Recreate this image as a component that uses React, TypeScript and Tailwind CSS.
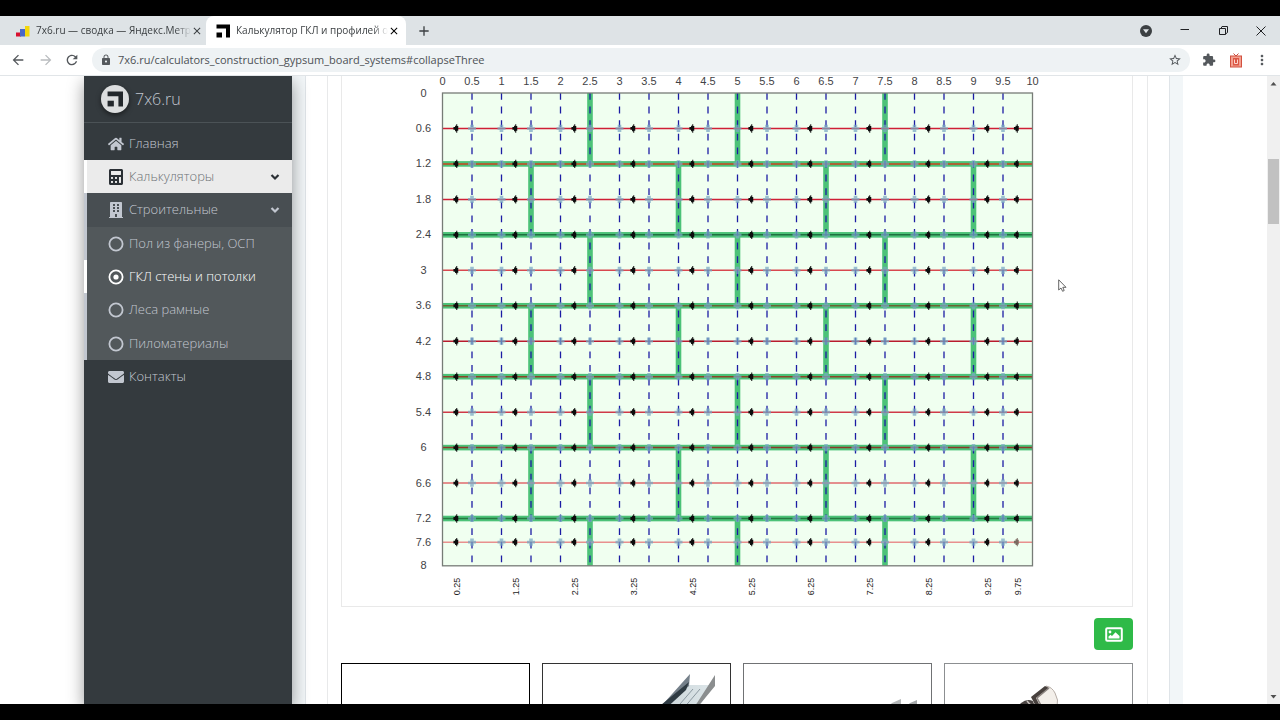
import type { ReactNode } from "react";
import { FaHome, FaCalculator, FaBuilding, FaEnvelope } from "react-icons/fa";
import {
  MdArrowBack,
  MdArrowForward,
  MdRefresh,
  MdLock,
  MdStarBorder,
  MdExtension,
  MdMoreVert,
  MdClose,
  MdAdd,
} from "react-icons/md";

function LogoMark({ className }: { className?: string }) {
  return (
    <svg viewBox="0 0 14 14" className={className} fill="currentColor" aria-hidden="true">
      <path d="M0.5 0.5H14V13.5H10V4.5H0.5Z" />
      <path d="M0.5 8.5H6V13.5H0.5Z" />
    </svg>
  );
}

function TabStrip() {
  return (
    <div className="flex h-[29px] items-stretch bg-[#dee3e6] text-[10px] text-[#3c4043]">
      <div className="flex w-[206px] items-center pl-4 pr-[7px]">
        <svg viewBox="0 0 14 12" className="mr-1.5 h-3 w-3.5 shrink-0" aria-hidden="true">
          <rect x="0" y="7.5" width="5" height="4" fill="#d8102f" />
          <rect x="4" y="4" width="5" height="7.5" fill="#4a68c8" />
          <rect x="9" y="1" width="4.5" height="10.5" fill="#f4d70c" />
        </svg>
        <span className="flex-1 whitespace-nowrap [mask-image:linear-gradient(to_right,black_90%,transparent)]">
          7x6.ru — сводка — Яндекс.Метр
        </span>
        <button aria-label="Закрыть вкладку">
          <MdClose className="size-3" />
        </button>
      </div>
      <div className="flex w-[200px] items-center rounded-t-lg bg-white pl-2.5 pr-[7px]">
        <LogoMark className="mr-1.5 size-3.5 shrink-0 text-black" />
        <span className="flex-1 whitespace-nowrap [mask-image:linear-gradient(to_right,black_90%,transparent)]">
          Калькулятор ГКЛ и профилей о
        </span>
        <button aria-label="Закрыть вкладку" className="text-black">
          <MdClose className="size-3" />
        </button>
      </div>
      <button aria-label="Новая вкладка" className="ml-2.5">
        <MdAdd className="size-4" />
      </button>
      <div className="ml-auto flex items-center text-[#202124]">
        <button aria-label="Поиск вкладок" className="mr-7">
          <svg viewBox="0 0 12 12" className="size-3">
            <circle cx="6" cy="6" r="6" fill="#3c4043" />
            <path d="M3 4.3H9L6 8.2Z" fill="#dee3e6" />
          </svg>
        </button>
        <button aria-label="Свернуть" className="mr-7">
          <svg viewBox="0 0 10 10" className="size-2.5" stroke="currentColor" fill="none">
            <path d="M0.5 3.5H9" />
          </svg>
        </button>
        <button aria-label="Развернуть" className="mr-7">
          <svg viewBox="0 0 10 10" className="size-2.5" stroke="currentColor" fill="none">
            <path d="M1.5 2.5H7.5V8.5H1.5ZM3 2.5L4 0.5H9.5V6.5L7.5 8" />
          </svg>
        </button>
        <button aria-label="Закрыть" className="mr-3.5">
          <svg viewBox="0 0 10 10" className="size-2.5" stroke="currentColor" fill="none">
            <path d="M0.5 0.5L9.5 9.5M9.5 0.5L0.5 9.5" />
          </svg>
        </button>
      </div>
    </div>
  );
}

function Toolbar() {
  return (
    <div className="flex h-[31px] items-center border-b border-[#e1e5e8] bg-white pl-2.5 text-[#54585c]">
      <button aria-label="Назад" className="mr-3">
        <MdArrowBack className="size-4" />
      </button>
      <button aria-label="Вперёд" className="mr-2.5 text-[#b9bcbf]">
        <MdArrowForward className="size-4" />
      </button>
      <button aria-label="Обновить">
        <MdRefresh className="size-4" />
      </button>
      <div className="ml-3 flex h-6 flex-1 items-center rounded-full bg-[#eef2f4] px-2">
        <MdLock className="mr-1.5 size-3" />
        <input
          aria-label="Адрес"
          readOnly
          value="7x6.ru/calculators_construction_gypsum_board_systems#collapseThree"
          className="min-w-0 flex-1 bg-transparent text-[11px] text-[#4d5155] outline-none"
        />
        <button aria-label="В закладки">
          <MdStarBorder className="size-3.5" />
        </button>
      </div>
      <button aria-label="Расширения" className="ml-3">
        <MdExtension className="size-3.5" />
      </button>
      <button aria-label="Расширение" className="ml-3.5">
        <svg viewBox="0 0 12 15" className="h-[15px] w-3">
          <path d="M3.5 0.5L6 3L8.5 0.5" stroke="#c94a3c" fill="none" />
          <rect x="0.5" y="3" width="11" height="11" fill="#f3a090" stroke="#d2503f" />
          <rect x="3" y="5" width="6" height="7.5" fill="#dc5644" />
          <path d="M4.5 6.5V10.5H7.5V6.5" stroke="#fbd5cd" fill="none" />
        </svg>
      </button>
      <button aria-label="Меню" className="ml-3 mr-2.5">
        <MdMoreVert className="size-4" />
      </button>
    </div>
  );
}

function Ring({ dot = false }: { dot?: boolean }) {
  return (
    <svg viewBox="0 0 16 16" className="size-4" aria-hidden="true">
      <circle cx="8" cy="8" r="6.6" fill="none" stroke="currentColor" strokeWidth="1.8" />
      {dot && <circle cx="8" cy="8" r="2.6" fill="currentColor" />}
    </svg>
  );
}

function Chevron() {
  return (
    <svg viewBox="0 0 10 8" className="h-2 w-2.5" aria-hidden="true">
      <path d="M1.5 2L5 5.5L8.5 2" fill="none" stroke="currentColor" strokeWidth="2.2" />
    </svg>
  );
}

function NavItem({
  icon,
  label,
  className,
  chevron,
}: {
  icon: ReactNode;
  label: string;
  className: string;
  chevron?: ReactNode;
}) {
  return (
    <a href="#collapseThree" className={`flex items-center border-l-3 pl-5 pr-3 text-[13px] font-light ${className}`}>
      <span className="mr-1 flex w-[18px] justify-center text-base">{icon}</span>
      <span className="flex-1 whitespace-nowrap">{label}</span>
      {chevron}
    </a>
  );
}

function Sidebar() {
  return (
    <aside className="z-10 w-52 shrink-0 bg-[#343a3e] text-[#c2c7d0] shadow-[0_6px_16px_rgba(0,0,0,0.4)]">
      <a href="#top" className="flex h-[47px] items-center border-b border-[#4b5256] pl-[17px] text-base font-light">
        <span className="mr-1.5 flex size-7 items-center justify-center rounded-full bg-[#dcdedf] shadow-[0_2px_5px_rgba(0,0,0,0.5)]">
          <LogoMark className="size-4 text-[#22272b]" />
        </span>
        7x6.ru
      </a>
      <nav className="pt-1">
        <NavItem icon={<FaHome />} label="Главная" className="h-[33px] border-transparent" />
        <NavItem
          icon={<FaCalculator className="text-[#2b3035]" />}
          label="Калькуляторы"
          chevron={<span className="text-[#2b3035]"><Chevron /></span>}
          className="h-[33px] border-white bg-[#ebebeb] text-[#6c7175]"
        />
        <NavItem
          icon={<FaBuilding />}
          label="Строительные"
          chevron={<Chevron />}
          className="h-[34px] border-[#c2c7d0] bg-[#484e52]"
        />
        <div className="bg-[#52585b]">
          <NavItem icon={<Ring />} label="Пол из фанеры, ОСП" className="h-[33px] border-[#c2c7d0]" />
          <NavItem icon={<Ring dot />} label="ГКЛ стены и потолки" className="h-[33px] border-white text-white" />
          <NavItem icon={<Ring />} label="Леса рамные" className="h-[34px] border-[#c2c7d0]" />
          <NavItem icon={<Ring />} label="Пиломатериалы" className="h-[33px] border-[#c2c7d0]" />
        </div>
        <NavItem icon={<FaEnvelope />} label="Контакты" className="h-[34px] border-transparent" />
      </nav>
    </aside>
  );
}

const LEFT = 100.5;
const TOP = 17;
const UNIT = 59;
const px = (v: number) => LEFT + v * UNIT;
const py = (v: number) => TOP + v * 59.1;

const columns = Array.from({ length: 21 }, (_, i) => i / 2);
const rows = [
  { v: 0.6, color: "#cf1f35" },
  { v: 1.2, color: "#c8451f" },
  { v: 1.8, color: "#cf1f35" },
  { v: 2.4, color: "#1f7040" },
  { v: 3, color: "#d8484f" },
  { v: 3.6, color: "#6b6432" },
  { v: 4.2, color: "#b81c2e" },
  { v: 4.8, color: "#8a4628" },
  { v: 5.4, color: "#cf3a48" },
  { v: 6, color: "#8a3a28" },
  { v: 6.6, color: "#e06a6e" },
  { v: 7.2, color: "#267a40" },
  { v: 7.6, color: "#e8908e" },
];
const seams = [1.2, 2.4, 3.6, 4.8, 6, 7.2];
const hangers = [0.25, 1.25, 2.25, 3.25, 4.25, 5.25, 6.25, 7.25, 8.25, 9.25, 9.75];

function LayoutChart() {
  const joints = [0, 1, 2, 3, 4, 5, 6].flatMap((r) =>
    (r % 2 === 0 ? [2.5, 5, 7.5] : [1.5, 4, 6.5, 9]).map((x) => ({ x, from: r * 1.2, to: Math.min(8, r * 1.2 + 1.2) })),
  );
  return (
    <svg
      viewBox="0 0 790 530"
      className="block w-full font-['Liberation_Sans',sans-serif]"
      role="img"
      aria-label="Схема раскладки листов ГКЛ"
    >
      <rect x={LEFT} y={TOP} width={590} height={472.8} fill="#f0fff0" />
      <g fill="#4cc278">
        {joints.map((j) => (
          <rect key={`${j.x}-${j.from}`} x={px(j.x) - 2.8} y={py(j.from)} width={5.6} height={py(j.to) - py(j.from)} />
        ))}
        {seams.map((v) => (
          <rect key={v} x={LEFT} y={py(v) - 2.8} width={590} height={5.6} />
        ))}
      </g>
      {rows.map((r) => (
        <line key={r.v} x1={LEFT} x2={px(10)} y1={py(r.v)} y2={py(r.v)} stroke={r.color} strokeWidth={1.5} />
      ))}
      <g stroke="#1c1ca4" strokeWidth={1.3} strokeDasharray="6.8 6.8">
        {columns.slice(1, 20).map((v) => (
          <line key={v} x1={px(v)} x2={px(v)} y1={TOP} y2={py(8)} />
        ))}
      </g>
      <rect x={LEFT} y={TOP} width={590} height={472.8} fill="none" stroke="#777c77" strokeWidth={1.3} />
      {rows.map((r) => (
        <g key={r.v}>
          {columns.slice(1, 20).map((v) => (
            <path
              key={v}
              transform={`translate(${px(v)} ${py(r.v)})`}
              d="M-4-1.3H-1.8V-3.6H1.8V-1.3H4V1.3H1.8V3.6H-1.8V1.3H-4Z"
              fill="#78a8c4"
              fillOpacity={0.72}
            />
          ))}
          {hangers.map((v) => (
            <path
              key={v}
              transform={`translate(${px(v) - 1} ${py(r.v)})`}
              d="M-2.8-1.4H-1.2V-2.8H0V-4.2H1V-2.4H2V2.4H1V4.2H0V2.8H-1.2V1.4H-2.8Z"
              fill={r.v === 7.6 && v === 9.75 ? "#7c6a60" : "#0c0c0c"}
            />
          ))}
        </g>
      ))}
      <g fill="#3f4245" fontSize={11} textAnchor="middle">
        {columns.map((v) => (
          <text key={v} x={px(v)} y={9}>
            {v}
          </text>
        ))}
        {[0, ...rows.map((r) => r.v), 8].map((v) => (
          <text key={v} x={81.5} y={py(v) + 3.5}>
            {v}
          </text>
        ))}
      </g>
      <g fill="#222222" fontSize={9} textAnchor="middle">
        {hangers.map((v) => (
          <text key={v} transform={`translate(${px(v) + 3} 510.5) rotate(-90)`}>
            {v}
          </text>
        ))}
      </g>
    </svg>
  );
}

function ProfileImage() {
  return (
    <svg viewBox="0 0 187 130" className="block w-full" aria-hidden="true">
      <defs>
        <linearGradient id="web" x1="0" y1="0" x2="1" y2="0">
          <stop offset="0" stopColor="#26323a" />
          <stop offset="0.45" stopColor="#5d6a72" />
          <stop offset="0.65" stopColor="#cfd9dd" />
          <stop offset="1" stopColor="#dde6e9" />
        </linearGradient>
      </defs>
      <path d="M146 21L170 21L118 102L52 106Z" fill="url(#web)" />
      <path d="M147 10L146 22L124 40L78 90L52 106L121 39Z" fill="#75808a" />
      <path d="M146 18L143 26L106 60L118 41Z" fill="#2f3b43" />
      <path d="M172 11V22L116 90V88L154 39Z" fill="#8b8e8f" />
      <path d="M150 25L124 55M157 25L134 52" stroke="#8b98a0" strokeWidth="1" />
    </svg>
  );
}

function ProfileTipsImage() {
  return (
    <svg viewBox="0 0 187 130" className="block w-full" aria-hidden="true">
      <path d="M157 35V44L100 100H84L148 39Z" fill="#b4b7b8" />
      <path d="M173 36V45L118 100H102L166 39Z" fill="#a6a9aa" />
    </svg>
  );
}

function AnchorImage() {
  return (
    <svg viewBox="0 0 187 130" className="block w-full" aria-hidden="true">
      <path d="M76 39Q82 34 88 37L98 48L60 90L42 76Z" fill="#4b4543" />
      <path d="M82 37L90 46" stroke="#c9c4c0" strokeWidth="1.5" />
      <path d="M86 33L101 22Q107 23 110 29Q114 36 112 43L96 56Z" fill="#f3efea" />
      <path d="M101 22Q107 23 110 29Q114 36 112 43" fill="none" stroke="#b5aca6" strokeWidth="1" />
      <path d="M86 33L100 22L104 24L91 34L97 46L95 50Z" fill="#48413e" />
      <path d="M104 24L92 34L98 45" fill="none" stroke="#8d8682" strokeWidth="1.5" />
    </svg>
  );
}

function ImageIcon() {
  return (
    <svg viewBox="0 0 18 15" className="h-[15px] w-[18px]" aria-hidden="true">
      <rect x="1.2" y="1.2" width="15.6" height="12.6" rx="1" fill="none" stroke="white" strokeWidth="2" />
      <circle cx="5" cy="5" r="1.4" fill="white" />
      <path d="M3.5 11.5V9.5L5.5 7.7L7 9L10.5 5.2L14.5 9V11.5Z" fill="white" />
    </svg>
  );
}

function MaterialCard({ children, label, className }: { children?: ReactNode; label: string; className: string }) {
  return (
    <a href="#materials" aria-label={label} className={`block h-40 overflow-hidden border bg-white ${className}`}>
      {children}
    </a>
  );
}

function Scrollbar() {
  return (
    <div className="flex w-[13px] shrink-0 flex-col items-center bg-[#f0f0f0]" aria-hidden="true">
      <svg viewBox="0 0 13 16" className="h-4 w-[13px]">
        <path d="M3.5 9.5H9.5L6.5 6Z" fill="#505050" />
      </svg>
      <div className="flex w-full flex-1 flex-col px-px">
        <div className="flex-[67]" />
        <div className="flex-[65] bg-[#c1c1c1]" />
        <div className="flex-[464]" />
      </div>
      <svg viewBox="0 0 13 16" className="h-4 w-[13px]">
        <path d="M3.5 7H9.5L6.5 10.5Z" fill="#505050" />
      </svg>
    </div>
  );
}

export default function App() {
  return (
    <div className="relative flex h-screen flex-col overflow-hidden border-y-16 border-black bg-white font-['Open_Sans',sans-serif]">
      <TabStrip />
      <Toolbar />
      <div className="flex min-h-0 flex-1">
        <div className="flex min-w-0 flex-1 justify-center overflow-hidden">
          <div className="flex w-full max-w-[1099px]">
            <Sidebar />
            <main className="min-w-0 flex-1 bg-[#f2f6f8] px-[13px]">
              <div className="h-full border-x border-[#dfe4e8] bg-white px-[21px]">
                <section className="border-x border-[#e8e9ea] pl-[13px] pr-[14px]">
                  <div className="border border-t-0 border-[#e9e9e9]">
                    <LayoutChart />
                  </div>
                  <div className="mt-[11px] flex justify-end">
                    <button
                      aria-label="Сохранить изображение"
                      className="flex h-8 w-[39px] items-center justify-center rounded bg-[#2fba48] text-white"
                    >
                      <ImageIcon />
                    </button>
                  </div>
                  <div className="mt-[13px] grid grid-cols-4 gap-3">
                    <MaterialCard label="Лист ГКЛ" className="border-black" />
                    <MaterialCard label="Профиль направляющий" className="border-[#333333]">
                      <ProfileImage />
                    </MaterialCard>
                    <MaterialCard label="Профиль потолочный" className="border-[#707274]">
                      <ProfileTipsImage />
                    </MaterialCard>
                    <MaterialCard label="Анкер" className="border-[#8c8f91]">
                      <AnchorImage />
                    </MaterialCard>
                  </div>
                </section>
              </div>
            </main>
          </div>
        </div>
        <Scrollbar />
      </div>
      <svg
        viewBox="0 0 9 13"
        className="pointer-events-none absolute left-[1058px] top-[263px] h-[13px] w-[9px]"
        aria-hidden="true"
      >
        <path
          d="M0.7 0.8V11L3 9L4.6 12.3L6.2 11.5L4.8 8.3H8Z"
          fill="white"
          stroke="#555555"
          strokeWidth="0.9"
        />
      </svg>
    </div>
  );
}
